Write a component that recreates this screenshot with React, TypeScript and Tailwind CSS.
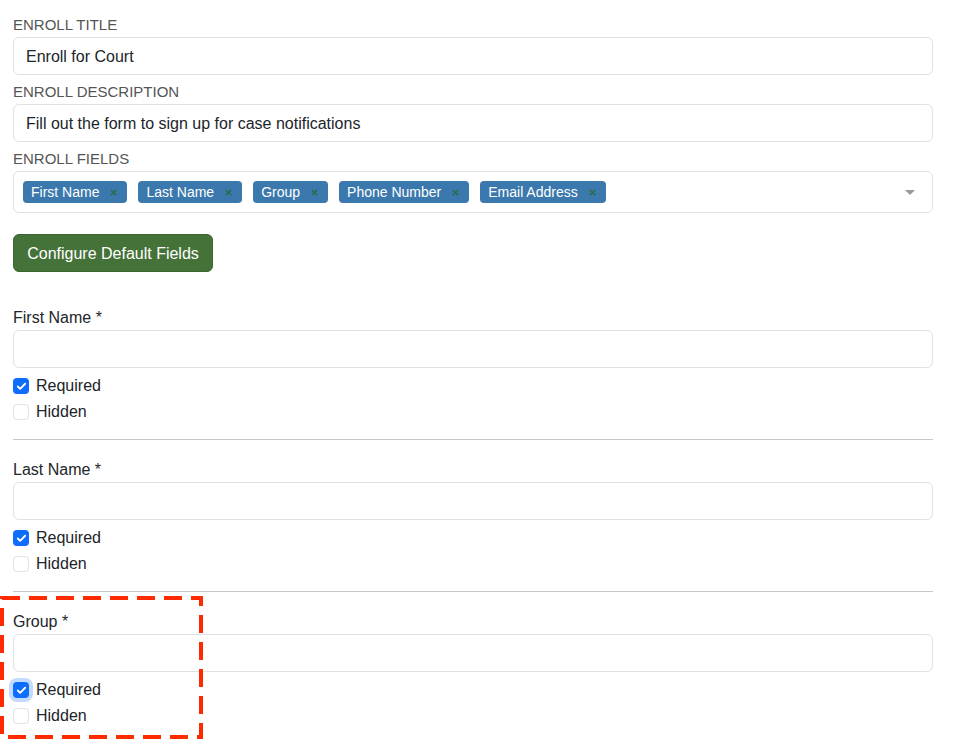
import { Check, X } from 'lucide-react'

const tags = ['First Name', 'Last Name', 'Group', 'Phone Number', 'Email Address']

function TopField({ label, value }: { label: string; value: string }) {
  return (
    <div className="mb-1">
      <label className="block h-[25px] text-[15px] leading-[26px] text-[#555]">{label}</label>
      <div className="flex h-[38px] items-center rounded-md border border-[#dee2e6] px-3 pt-px text-base text-[#212529]">
        {value}
      </div>
    </div>
  )
}

function CheckRow({ label, checked, focused }: { label: string; checked?: boolean; focused?: boolean }) {
  return (
    <div className="mb-0.5 flex h-6 items-center gap-[7px]">
      <span
        className={
          checked
            ? 'flex h-4 w-4 items-center justify-center rounded bg-[#0d6efd]' + (focused ? ' ring-4 ring-[#c2dbfe]' : '')
            : 'h-4 w-4 rounded border border-[#dee2e6] bg-white'
        }
      >
        {checked && <Check size={11} strokeWidth={4} className="text-white" />}
      </span>
      <span className="text-base text-[#212529]">{label}</span>
    </div>
  )
}

function FieldSection({ name, focused, last }: { name: string; focused?: boolean; last?: boolean }) {
  return (
    <div>
      <label className="block h-6 text-base leading-6 text-[#212529]">{name} *</label>
      <div className="h-[38px] rounded-md border border-[#dee2e6] bg-white" />
      <div className="mt-[6px]">
        <CheckRow label="Required" checked focused={focused} />
        <CheckRow label="Hidden" />
      </div>
      {!last && <hr className="mb-[18px] mt-[15px] border-t border-[#c8c8c8]" />}
    </div>
  )
}

export default function App() {
  return (
    <div
      className="relative min-h-[742px] bg-white pl-[13px] pr-[21px] pt-3"
      style={{ fontFamily: '"Liberation Sans", Arial, sans-serif' }}
    >
      <TopField label="ENROLL TITLE" value="Enroll for Court" />
      <TopField label="ENROLL DESCRIPTION" value="Fill out the form to sign up for case notifications" />

      <div>
        <label className="block h-[25px] text-[15px] leading-[26px] text-[#555]">ENROLL FIELDS</label>
        <div className="flex h-[42px] items-center rounded-md border border-[#dee2e6] pl-[9px] pr-[17px]">
          <div className="flex flex-1 items-center gap-[11px]">
            {tags.map(t => (
              <span
                key={t}
                className="flex h-[22px] items-center gap-[10px] rounded bg-[#3a78ad] pl-[8px] pr-[9px] text-sm text-white"
              >
                {t}
                <X size={9} strokeWidth={4} className="text-[#2c6b44]" />
              </span>
            ))}
          </div>
          <span className="h-0 w-0 border-x-[5px] border-t-[5px] border-x-transparent border-t-[#999]" />
        </div>
      </div>

      <button className="mt-[21px] h-[38px] w-[200px] rounded-md border border-[#3b6632] bg-[#447238] pt-px text-base text-white">
        Configure Default Fields
      </button>

      <div className="mt-[34px]">
        <FieldSection name="First Name" />
        <FieldSection name="Last Name" />
        <FieldSection name="Group" focused last />
      </div>

      {/* annotation overlay */}
      <svg className="pointer-events-none absolute left-0 top-[596px]" width="205" height="144">
        <rect x="2" y="2" width="199" height="139" fill="none" stroke="#ff2a00" strokeWidth="4" strokeDasharray="18 9" />
      </svg>
    </div>
  )
}
